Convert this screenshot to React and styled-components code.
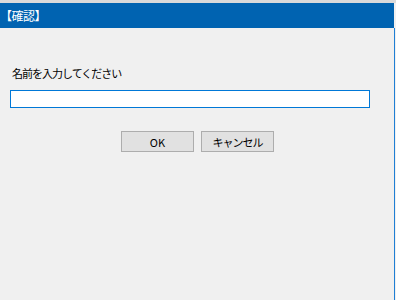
import styled, { createGlobalStyle } from "styled-components";

const GlobalStyle = createGlobalStyle`
  html, body {
    margin: 0;
    padding: 0;
    background: #f0f0f0;
    font-family: "Noto Sans CJK JP", "Noto Sans", sans-serif;
  }
`;

const Screen = styled.div`
  display: flex;
  flex-direction: column;
  width: 396px;
  height: 300px;
  overflow: hidden;
`;

const TopEdge = styled.div`
  height: 3px;
  background: #dadada;
`;

const TitleBar = styled.div`
  display: flex;
  align-items: center;
  width: 394px;
  height: 25px;
  padding-left: 0;
  box-sizing: border-box;
  background: #0063b1;
  color: #fff;
  font-size: 12px;
  letter-spacing: -0.5px;
`;

const Body = styled.div`
  flex: 1;
  width: 395px;
  box-sizing: border-box;
  border-right: 1px solid #1f7fd5;
  padding: 38px 0 0 10px;
`;

const Label = styled.div`
  padding-left: 2px;
  font-size: 11px;
  letter-spacing: -1px;
  color: #000;
  line-height: 14px;
`;

const TextBox = styled.input`
  display: block;
  width: 360px;
  height: 18px;
  margin-top: 10px;
  box-sizing: border-box;
  border: 1px solid #0078d7;
  background: #fff;
  outline: none;
  padding: 0 3px;
`;

const Buttons = styled.div`
  display: flex;
  gap: 7px;
  margin: 23px 0 0 111px;
`;

const Button = styled.button`
  width: 73px;
  height: 21px;
  box-sizing: border-box;
  border: 1px solid #adadad;
  background: #e1e1e1;
  font-family: "Noto Sans CJK JP", "Noto Sans", sans-serif;
  font-size: 11px;
  letter-spacing: ${(p) => (p.$tight ? "-1px" : "0")};
  color: #000;
  padding: 0;
`;

export default function App() {
  return (
    <>
      <GlobalStyle />
      <Screen>
        <TopEdge />
        <TitleBar>【確認】</TitleBar>
        <Body>
          <Label>名前を入力してください</Label>
          <TextBox />
          <Buttons>
            <Button>OK</Button>
            <Button $tight>キャンセル</Button>
          </Buttons>
        </Body>
      </Screen>
    </>
  );
}
